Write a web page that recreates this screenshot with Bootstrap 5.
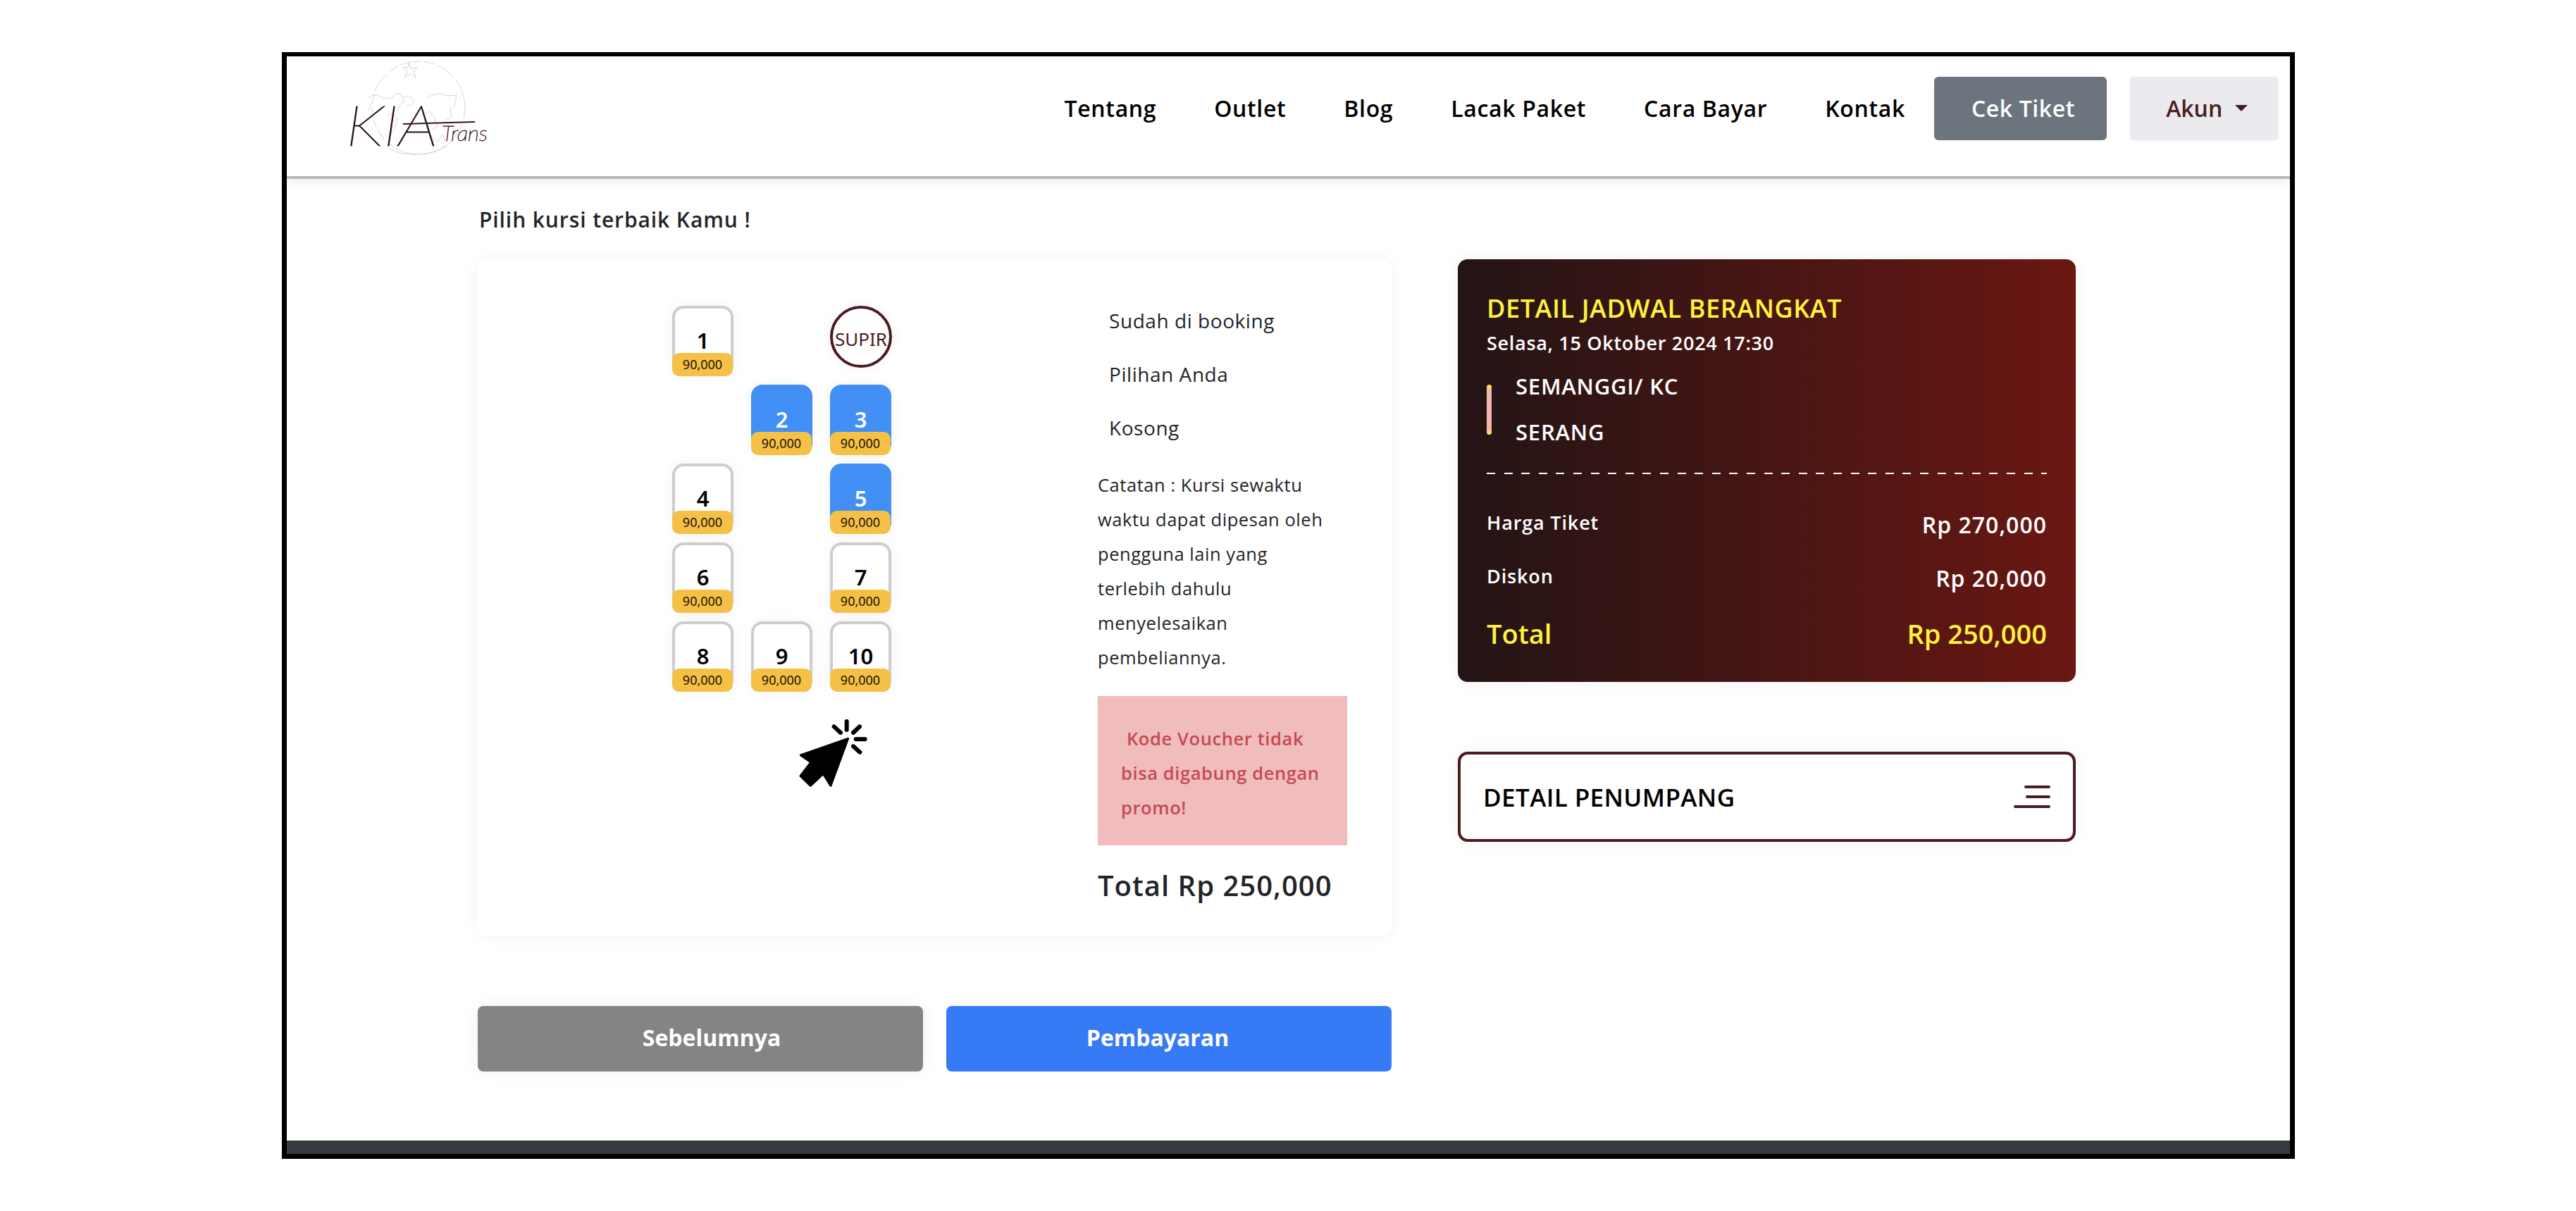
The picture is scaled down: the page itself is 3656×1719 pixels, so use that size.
<!DOCTYPE html>
<html lang="id">
<head>
<meta charset="utf-8">
<title>KIA Trans</title>
<link href="https://cdn.jsdelivr.net/npm/bootstrap@5.3.0/dist/css/bootstrap.min.css" rel="stylesheet">
<style>
html,body{background:#fff}
body{font-family:"Open Sans","Noto Sans",sans-serif;color:#212529;margin:0}
.frame{width:2857px;margin:74px 0 74px 400px;border:solid #000;border-width:6px 7px 7px 7px;background:#fff}
.topbar{height:170px;padding:0 16px 22px 83px;background:#fff;box-shadow:0 4px 0 #b8b8b8,0 8px 14px rgba(0,0,0,.08);position:relative}
.brand-svg{display:block;width:202px;height:138px}
.topbar.navbar-expand .navbar-nav .nav-link{font-size:32px;font-weight:600;color:#000;padding:0 41px;line-height:44px;letter-spacing:.65px}
.btn-cek{width:245px;height:90px;font-size:32px;font-weight:600;letter-spacing:.6px;color:#fff;background:#6c757d;border:0;border-radius:6px;padding:0 0 0 8px;margin-right:33px}
.btn-akun{width:211px;height:90px;font-size:32px;font-weight:600;color:#4a1c20;background:#ebebef;border:0;border-radius:6px;padding:0 0 0 7px;box-shadow:0 2px 10px rgba(0,0,0,.03)}
.btn-akun::after{margin-left:.55em}
.content{padding:42px 304px 98px 271px}
.lead-line{font-size:30px;font-weight:600;letter-spacing:.9px;line-height:40px;margin:0 0 36px 2px;color:#212529}
.col-main{width:1297px}
.col-side{width:877px}
.seat-card{height:961px;border-radius:14px;background:#fff;box-shadow:0 0 24px rgba(0,0,0,.05);padding:66px 63px 0 276px}
.seat-grid{display:grid;grid-template-columns:repeat(3,87px);grid-auto-rows:100px;gap:12px 25px}
.seat{border-radius:16px;display:flex;flex-direction:column;align-items:stretch;text-align:center;font-family:"Noto Sans",sans-serif;box-shadow:inset 0 0 0 4px #cdcdcd,0 0 18px rgba(0,0,0,.05);background:#fff;color:#000}
.seat-on{background:#428ff5;color:#fff;box-shadow:0 0 18px rgba(0,0,0,.05)}
.seat-no{font-size:31px;font-weight:600;line-height:34px;padding-top:32px;height:67px;display:block}
.seat-price{display:block;height:33px;line-height:33px;font-size:18px;background:#f4c045;color:#1a1208;border-radius:10px;width:86px}
.seat-gap{visibility:hidden}
.seat-driver{width:88px;height:88px;border:4px solid #4a1c20;border-radius:50%;font-family:"Noto Sans",sans-serif;font-size:26px;color:#4a1c20;background:#fff;box-shadow:0 0 18px rgba(0,0,0,.05);line-height:1;padding-top:6px}
.click-icon{display:block;width:98px;height:98px;margin:38px 0 0 179px}
.info-col{width:354px;margin-top:-17px}
.legend-row{height:76px;line-height:76px;font-size:28px;font-weight:500;letter-spacing:.55px;padding-left:16px;color:#212529}
.note{font-size:25.5px;font-weight:500;letter-spacing:.55px;line-height:49px;margin:19px 0 30px;color:#212529;white-space:nowrap}
.promo{height:212px;background:#f1bcbc;color:#c44a55;font-size:25.5px;font-weight:600;letter-spacing:.6px;line-height:49px;padding:36px 10px 0 33px;white-space:nowrap}
.promo-first{padding-left:8px}
.grand{font-size:40px;font-weight:600;letter-spacing:1px;line-height:60px;margin-top:27px;white-space:nowrap}
.nav-row{margin-top:99px;gap:33px}
.btn-prev,.btn-pay{width:632px;height:93px;font-size:32px;font-weight:700;color:#fff;border:0;border-radius:8px}
.btn-prev{background:#848484;box-shadow:0 0 24px rgba(0,0,0,.06);padding:0 0 4px 32px}
.btn-pay{background:#377af5;padding:0 32px 4px 0}
.schedule{height:600px;border-radius:14px;background:linear-gradient(90deg,#231415 0%,#6b1712 100%);color:#fff;padding:48px 41px 0 41px;box-shadow:0 0 24px rgba(0,0,0,.05)}
.sch-title{font-size:36px;font-weight:600;letter-spacing:.6px;line-height:44px;color:#fff23d;white-space:nowrap}
.sch-date{font-size:27px;font-weight:600;letter-spacing:.7px;line-height:40px;margin-top:7px;white-space:nowrap}
.route{margin-top:9px}
.route-bar{width:7px;height:71px;border-radius:4px;background:linear-gradient(180deg,#fff23d 0,#f3b3b3 12%,#f3b3b3 88%,#fff23d 100%);margin:30px 34px 0 0}
.route-name{font-size:31px;font-weight:600;letter-spacing:.8px;line-height:65px;white-space:nowrap}
.dash-line{height:2px;background:repeating-linear-gradient(90deg,#fff 0,#fff 12px,transparent 12px,transparent 24.6px);margin:25px 0 0}
.fare-row{display:flex;justify-content:space-between;align-items:center;white-space:nowrap}
.fare-a{margin-top:50px;height:44px}
.fare-b{margin-top:32px;height:44px}
.fare-c{margin-top:28px;height:56px;color:#fff23d;font-size:38px;font-weight:600}
.fare-a>span:first-child,.fare-b>span:first-child{font-size:27px;font-weight:600;letter-spacing:.85px;position:relative;top:-3px}
.fare-a>span:last-child,.fare-b>span:last-child{font-size:32px;font-weight:600;letter-spacing:1px}
.pax{height:128px;margin-top:99px;border:4px solid #4a1c20;border-radius:14px;background:#fff;padding:0 32px 0 32px;box-shadow:0 0 24px rgba(0,0,0,.05)}
.pax-title{font-size:35px;font-weight:600;letter-spacing:.4px;color:#000;white-space:nowrap;line-height:1}
.pax-lines{display:block;width:52px;height:32px}
.foot-bar{height:19px;background:#343a40}
</style>
</head>
<body>
<div class="frame">
  <nav class="topbar navbar navbar-expand d-flex align-items-center">
    <a class="navbar-brand p-0 m-0" href="#" aria-label="KIA Trans">
      <svg class="brand-svg" viewBox="0 0 202 138" xmlns="http://www.w3.org/2000/svg">
        <g fill="none" stroke="#cfcfcf" stroke-width=".9">
          <circle cx="104" cy="68" r="66" stroke-dasharray="16 3 30 4"/>
          <path d="M90 4l4 9 8-3-5 7 3 9-7-6-9 5 4-9-6-5 8-1z"/>
          <path d="M32 55c6-8 14-5 20-2s8 0 14 2l6-8 8 3 4 9-8 6-2 9M36 62l-3 11M82 54c6-4 12-4 14 3s-4 10-8 7M116 55c8-8 18-8 28-4l14-1-3 15-6 5 2 10-8 6M110 80l9-7 7 7 5 14-7 5M62 78c5-3 10 0 12 6l-3 12-8 12M120 108l12 8 6-10 5 12"/>
          <path d="M60 124c18 14 62 14 84-2"/>
        </g>
        <text x="1" y="122" font-family="Lato" font-weight="100" font-style="italic" font-size="80" fill="#2b1012" stroke="#2b1012" stroke-width="1" textLength="130" lengthAdjust="spacingAndGlyphs">KIA</text>
        <text x="137" y="115" font-family="Lato" font-weight="100" font-style="italic" font-size="30" fill="#3a1416" stroke="#3a1416" stroke-width=".8" textLength="65" lengthAdjust="spacingAndGlyphs">Trans</text>
        <path d="M82 91l102-3" stroke="#3a1416" stroke-width="2" fill="none"/>
      </svg>
    </a>
    <ul class="navbar-nav ms-auto align-items-center">
      <li class="nav-item"><a class="nav-link" href="#">Tentang</a></li>
      <li class="nav-item"><a class="nav-link" href="#">Outlet</a></li>
      <li class="nav-item"><a class="nav-link" href="#">Blog</a></li>
      <li class="nav-item"><a class="nav-link" href="#">Lacak Paket</a></li>
      <li class="nav-item"><a class="nav-link" href="#">Cara Bayar</a></li>
      <li class="nav-item"><a class="nav-link" href="#">Kontak</a></li>
    </ul>
    <a class="btn btn-cek d-inline-flex align-items-center justify-content-center" href="#">Cek Tiket</a>
    <button class="btn btn-akun dropdown-toggle" type="button">Akun</button>
  </nav>

  <main class="content">
    <p class="lead-line">Pilih kursi terbaik Kamu !</p>
    <div class="d-flex justify-content-between">
      <div class="col-main">
        <div class="seat-card d-flex justify-content-between">
          <div>
            <div class="seat-grid">
              <div class="seat"><span class="seat-no">1</span><span class="seat-price">90,000</span></div>
              <div class="seat-gap"></div>
              <div class="seat-driver d-flex align-items-center justify-content-center">SUPIR</div>
              <div class="seat-gap"></div>
              <div class="seat seat-on"><span class="seat-no">2</span><span class="seat-price">90,000</span></div>
              <div class="seat seat-on"><span class="seat-no">3</span><span class="seat-price">90,000</span></div>
              <div class="seat"><span class="seat-no">4</span><span class="seat-price">90,000</span></div>
              <div class="seat-gap"></div>
              <div class="seat seat-on"><span class="seat-no">5</span><span class="seat-price">90,000</span></div>
              <div class="seat"><span class="seat-no">6</span><span class="seat-price">90,000</span></div>
              <div class="seat-gap"></div>
              <div class="seat"><span class="seat-no">7</span><span class="seat-price">90,000</span></div>
              <div class="seat"><span class="seat-no">8</span><span class="seat-price">90,000</span></div>
              <div class="seat"><span class="seat-no">9</span><span class="seat-price">90,000</span></div>
              <div class="seat"><span class="seat-no">10</span><span class="seat-price">90,000</span></div>
            </div>
            <svg class="click-icon" viewBox="700 660 294 294" xmlns="http://www.w3.org/2000/svg">
              <path d="M912 745L710 816L754 846L709 904L752 946L806 895L838 946Z" fill="#000" stroke="#000" stroke-width="9" stroke-linejoin="round"/>
              <g stroke="#000" stroke-width="18" stroke-linecap="round" fill="none">
                <path d="M906 672V708M852 694L880 720M961 694L934 720M945 748H984M934 778L962 803"/>
              </g>
            </svg>
          </div>
          <div class="info-col">
            <div class="legend-row">Sudah di booking</div>
            <div class="legend-row">Pilihan Anda</div>
            <div class="legend-row">Kosong</div>
            <p class="note">Catatan : Kursi sewaktu<br>waktu dapat dipesan oleh<br>pengguna lain yang<br>terlebih dahulu<br>menyelesaikan<br>pembeliannya.</p>
            <div class="promo"><span class="promo-first">Kode Voucher tidak</span><br>bisa digabung dengan<br>promo!</div>
            <div class="grand">Total Rp 250,000</div>
          </div>
        </div>
        <div class="nav-row d-flex">
          <button class="btn btn-prev" type="button">Sebelumnya</button>
          <button class="btn btn-pay" type="button">Pembayaran</button>
        </div>
      </div>
      <div class="col-side">
        <div class="schedule">
          <div class="sch-title">DETAIL JADWAL BERANGKAT</div>
          <div class="sch-date">Selasa, 15 Oktober 2024 17:30</div>
          <div class="route d-flex">
            <div class="route-bar"></div>
            <div>
              <div class="route-name">SEMANGGI/ KC</div>
              <div class="route-name">SERANG</div>
            </div>
          </div>
          <div class="dash-line"></div>
          <div class="fare-row fare-a"><span>Harga Tiket</span><span>Rp 270,000</span></div>
          <div class="fare-row fare-b"><span>Diskon</span><span>Rp 20,000</span></div>
          <div class="fare-row fare-c"><span>Total</span><span>Rp 250,000</span></div>
        </div>
        <div class="pax d-flex align-items-center justify-content-between">
          <span class="pax-title">DETAIL PENUMPANG</span>
          <svg class="pax-lines" viewBox="0 0 52 32" xmlns="http://www.w3.org/2000/svg">
            <path d="M17 2H50M19 16H50M2 30H50" stroke="#4a1c20" stroke-width="4" stroke-linecap="round" fill="none"/>
          </svg>
        </div>
      </div>
    </div>
  </main>
  <div class="foot-bar"></div>
</div>
<script src="https://cdn.jsdelivr.net/npm/bootstrap@5.3.0/dist/js/bootstrap.bundle.min.js"></script>
</body>
</html>
